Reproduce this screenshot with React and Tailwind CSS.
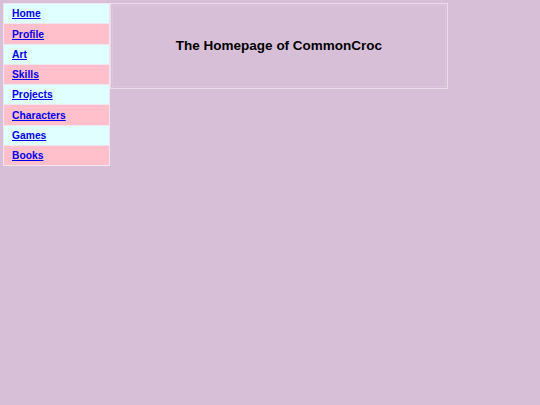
import React from "react";

const items = [
  ["Home", "bg-[#e0ffff]"],
  ["Profile", "bg-[#ffc0cb]"],
  ["Art", "bg-[#e0ffff]"],
  ["Skills", "bg-[#ffc0cb]"],
  ["Projects", "bg-[#e0ffff]"],
  ["Characters", "bg-[#ffc0cb]"],
  ["Games", "bg-[#e0ffff]"],
  ["Books", "bg-[#ffc0cb]"],
];

export default function App() {
  return (
    <div
      className="w-[540px] h-[405px] bg-[#d8bfd8] p-[3px] flex items-start"
      style={{ fontFamily: '"Liberation Sans", Arial, sans-serif' }}
    >
      <div className="w-[107px] border border-[#f0e4f0] flex flex-col">
        {items.map(([label, bg], i) => (
          <div
            key={label}
            className={`${bg} flex items-center pl-[8px] pt-[2px] ${i > 0 ? "h-[20.25px] border-t border-[#f0e4f0]" : "h-[19.25px]"}`}
          >
            <a href="#" className="text-[10.3px] font-bold text-[#0000ee] underline leading-none">
              {label}
            </a>
          </div>
        ))}
      </div>
      <div className="w-[338px] h-[86px] border border-[#ecdcec] p-px">
        <div className="w-full h-full border border-[#dcc6dc] flex items-center justify-center">
          <h1 className="text-[13.5px] font-bold text-black">The Homepage of CommonCroc</h1>
        </div>
      </div>
    </div>
  );
}
